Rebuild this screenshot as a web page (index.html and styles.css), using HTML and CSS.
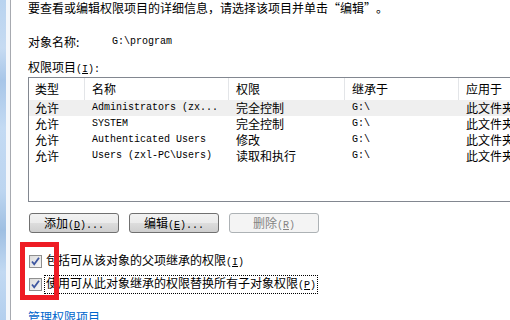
FILE: index.html
```html
<!DOCTYPE html>
<html lang="zh-CN">
<head>
<meta charset="utf-8">
<link rel="stylesheet" href="styles.css">
</head>
<body>
<div class="frame">
  <div class="edge"></div>
  <div class="edge-gap"></div>
  <div class="edge-line"></div>
  <div class="content">
    <p class="intro">要查看或编辑权限项目的详细信息，请选择该项目并单击<span class="fw">“</span>编辑<span class="fw">”</span>。</p>
    <div class="object-row">
      <span class="obj-label">对象名称:</span>
      <span class="mono obj-value">G:\program</span>
    </div>
    <div class="list-label">权限项目<span class="acc">(<u>I</u>):</span></div>
    <div class="list">
      <div class="row head">
        <div class="cell c1">类型</div>
        <div class="cell">名称</div>
        <div class="cell">权限</div>
        <div class="cell">继承于</div>
        <div class="cell">应用于</div>
      </div>
      <div class="row sel">
        <div class="cell c1">允许</div>
        <div class="cell mono">Administrators (zx...</div>
        <div class="cell">完全控制</div>
        <div class="cell mono">G:\</div>
        <div class="cell">此文件夹</div>
      </div>
      <div class="row">
        <div class="cell c1">允许</div>
        <div class="cell mono">SYSTEM</div>
        <div class="cell">完全控制</div>
        <div class="cell mono">G:\</div>
        <div class="cell">此文件夹</div>
      </div>
      <div class="row">
        <div class="cell c1">允许</div>
        <div class="cell mono">Authenticated Users</div>
        <div class="cell">修改</div>
        <div class="cell mono">G:\</div>
        <div class="cell">此文件夹</div>
      </div>
      <div class="row">
        <div class="cell c1">允许</div>
        <div class="cell mono">Users (zxl-PC\Users)</div>
        <div class="cell">读取和执行</div>
        <div class="cell mono">G:\</div>
        <div class="cell">此文件夹</div>
      </div>
    </div>
    <div class="buttons">
      <button class="btn">添加<span class="acc">(<u>D</u>)...</span></button>
      <button class="btn">编辑<span class="acc">(<u>E</u>)...</span></button>
      <button class="btn disabled">删除<span class="acc">(<u>R</u>)</span></button>
    </div>
    <div class="checks">
      <label class="check">
        <span class="box"><svg width="13" height="13" viewBox="0 0 13 13"><path d="M3 6.5 L5.2 9.2 L10 2.8" fill="none" stroke="#3d56a0" stroke-width="1.8"/></svg></span>
        <span class="check-text">包括可从该对象的父项继承的权限<span class="acc">(<u>I</u>)</span></span>
      </label>
      <label class="check">
        <span class="box"><svg width="13" height="13" viewBox="0 0 13 13"><path d="M3 6.5 L5.2 9.2 L10 2.8" fill="none" stroke="#3d56a0" stroke-width="1.8"/></svg></span>
        <span class="check-text focus">使用可从此对象继承的权限替换所有子对象权限<span class="acc">(<u>P</u>)</span></span>
      </label>
    </div>
    <a class="link" href="#">管理权限项目</a>
  </div>
  <div class="mark"></div>
</div>
</body>
</html>
```

FILE: styles.css
```css
html, body {
  margin: 0;
  padding: 0;
  background: #fff;
}
body {
  width: 510px;
  height: 320px;
  overflow: hidden;
  font-family: "Noto Sans CJK SC", "Liberation Sans", sans-serif;
  font-size: 12px;
  color: #000;
}
.frame {
  position: relative;
  display: flex;
  height: 320px;
}
.edge {
  width: 6px;
  flex: none;
  background: linear-gradient(to bottom, #b9d3ef 0%, #c6dbf2 15%, #a8c6e8 25%, #c3daf3 40%, #bcd5f0 60%, #9fbfe2 72%, #c2d9f2 85%, #b3cfee 100%);
}
.edge-gap {
  width: 4px;
  flex: none;
  background: #f4f7fb;
}
.edge-line {
  width: 1px;
  flex: none;
  background: #a7aab0;
}
.content {
  flex: 1;
  padding-left: 17px;
  min-width: 0;
}
.intro {
  margin: 0;
  height: 16px;
  line-height: 16px;
  white-space: nowrap;
}
.fw {
  display: inline-block;
  width: 12px;
}
.fw:first-child {
  text-align: right;
}
.object-row {
  display: flex;
  margin-top: 18px;
  height: 16px;
  line-height: 16px;
}
.obj-label {
  width: 84px;
}
.mono {
  font-family: "Liberation Mono", monospace;
  font-size: 10px;
}
.acc {
  font-family: "Liberation Mono", monospace;
  font-size: 10px;
}
.list-label {
  margin-top: 9px;
  height: 16px;
  line-height: 16px;
}
.list {
  margin-top: 2px;
  width: 482px;
  height: 123px;
  border: 1px solid #828790;
  border-right: none;
  overflow: hidden;
}
.row {
  display: grid;
  grid-template-columns: 56px 144px 116px 114px 52px;
  height: 16px;
  line-height: 16px;
}
.row.head {
  height: 22px;
  line-height: 22px;
}
.row.head .cell {
  border-right: 1px solid #e3e5e8;
}
.row.head .cell:last-child {
  border-right: none;
}
.row.sel {
  background: #efefef;
}
.cell {
  padding-left: 7px;
  white-space: nowrap;
  overflow: hidden;
}
.cell.c1 {
  padding-left: 6px;
}
.buttons {
  display: flex;
  gap: 10px;
  margin-top: 11px;
  padding-left: 1px;
}
.btn {
  width: 90px;
  height: 20px;
  padding: 0;
  border: 1px solid #707070;
  border-radius: 3px;
  background: linear-gradient(to bottom, #f2f2f2 0%, #ebebeb 50%, #dddddd 51%, #cfcfcf 100%);
  font-family: "Noto Sans CJK SC", sans-serif;
  font-size: 12px;
  line-height: 18px;
  color: #000;
}
.btn.disabled {
  border-color: #adb2b5;
  background: #f4f4f4;
  color: #838383;
}
.checks {
  margin-top: 21px;
  display: flex;
  flex-direction: column;
  gap: 8px;
}
.check {
  display: flex;
  align-items: center;
  gap: 3px;
  height: 15px;
}
.box {
  width: 11px;
  height: 11px;
  border: 1px solid #8f8f8f;
  background: linear-gradient(135deg, #dcdcdc, #f6f6f6);
  position: relative;
  flex: none;
  margin-left: 1px;
}
.box svg {
  position: absolute;
  left: -1px;
  top: -1px;
}
.check-text {
  line-height: 14px;
  padding: 0 1px;
}
.check-text.focus {
  outline: 1px dotted #000;
}
.link {
  display: block;
  margin-top: 17px;
  color: #0066cc;
  text-decoration: none;
  line-height: 16px;
}
.mark {
  position: absolute;
  left: 20px;
  top: 242px;
  width: 29px;
  height: 48px;
  border: 5px solid #ee1c24;
}
```
